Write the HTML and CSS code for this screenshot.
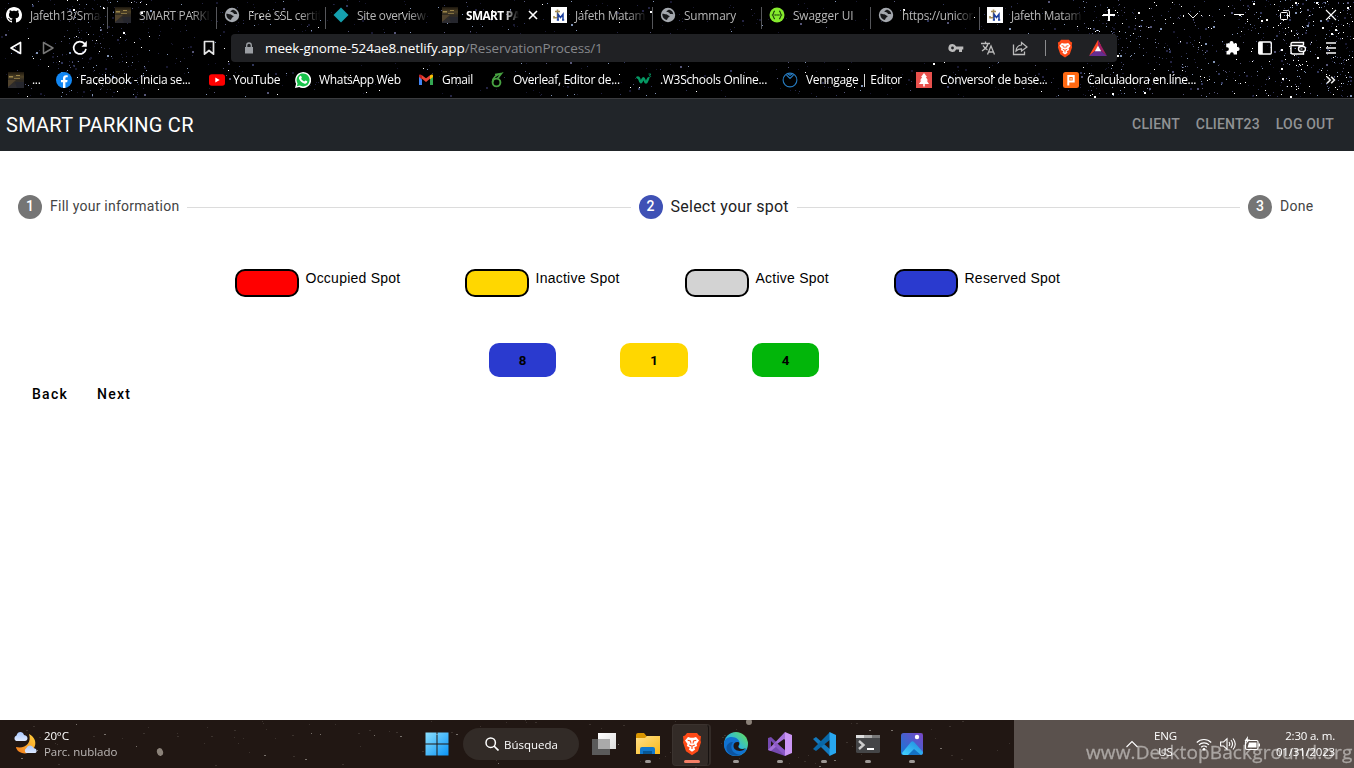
FILE: index.html
```html
<!DOCTYPE html>
<html lang="en">
<head>
<meta charset="utf-8">
<title>SMART PARKING CR</title>
<link rel="stylesheet" href="styles.css">
</head>
<body>
<svg class="defs" width="0" height="0">
  <defs>
    <linearGradient id="gFlag" x1="0" y1="0" x2="1" y2="1"><stop offset="0" stop-color="#8be0ff"/><stop offset="1" stop-color="#0a93f5"/></linearGradient>
    <linearGradient id="gFolder" x1="0" y1="0" x2="1" y2="1"><stop offset="0" stop-color="#ffe08a"/><stop offset="1" stop-color="#fbb917"/></linearGradient>
    <linearGradient id="gEdge" x1="0" y1="1" x2="1" y2="0"><stop offset="0" stop-color="#1380d8"/><stop offset=".5" stop-color="#2cb9db"/><stop offset="1" stop-color="#6be24c"/></linearGradient>
    <linearGradient id="gMoon" x1="0" y1="1" x2="1" y2="0"><stop offset="0" stop-color="#f47a1c"/><stop offset="1" stop-color="#ffd23c"/></linearGradient>
    <linearGradient id="gCloud" x1="0" y1="0" x2="0" y2="1"><stop offset="0" stop-color="#a9c8ff"/><stop offset="1" stop-color="#dfeaff"/></linearGradient>
    <linearGradient id="gPhoto" x1="0" y1="1" x2="1" y2="0"><stop offset="0" stop-color="#127bd6"/><stop offset="1" stop-color="#7a45c5"/></linearGradient>
    <linearGradient id="gHill" x1="0" y1="1" x2="1" y2="0"><stop offset="0" stop-color="#43d3ff"/><stop offset="1" stop-color="#1c86dc"/></linearGradient>
    <linearGradient id="gTask" x1="0" y1="0" x2="1" y2="1"><stop offset="0" stop-color="#fff"/><stop offset="1" stop-color="#dcdcdc"/></linearGradient>
    <linearGradient id="gRoad" x1="0" y1="0" x2="0" y2="1"><stop offset="0" stop-color="#1c160d"/><stop offset=".3" stop-color="#4d4127"/><stop offset=".5" stop-color="#2f2a22"/><stop offset="1" stop-color="#2d2d33"/></linearGradient>
  </defs>
  <symbol id="globe" viewBox="0 0 16 16"><circle cx="8" cy="8" r="7.200" fill="#a4a8ae"/><path d="M2.300 6.800c1.700 0 2.600.5 3.800.5 1.400 0 1.800 1.300 3 1.400.9.100.4 1.300-.4 1.500-1.300.3-.9 1.600-1.600 2.400-.6.700-1 .3-1.700 0-2-1-3.300-3.300-3.100-5.800zM8.500 2.800c-.4.900-1.900.6-2 1.800 0 1.100 1.500.5 2.400.9.900.4.700 1.600 1.900 1.600.9 0 1.700-.2 2.400.4.200-2.300-1.800-4.700-4.700-4.700z" fill="#17181a"/></symbol>
  <symbol id="photo" viewBox="0 0 16 16"><path d="M0 0h16v16H0z" fill="url(#gRoad)"/><path d="M1 4h4v1.500H1zM8 3h4v1H8zM6 6h6v.8H6z" fill="#9c854a"/><path d="M0 8l8 0-8 7z" fill="#51432d"/><path d="M7 10h9v6H9z" fill="#25262d"/></symbol>
  <symbol id="jm" viewBox="0 0 16 16"><path d="M0 0h16v16H0z" fill="#fff"/><path d="M6.500 2.500v8.300H3V9M4 4.500h5" fill="none" stroke="#a28b55" stroke-width="1.600"/><path d="M7 13V7.200l2.500 3.300L12 7.200V13M5.800 13h2.200M11 13h2.200" fill="none" stroke="#1b3f9e" stroke-width="1.500"/></symbol>
  <symbol id="brave" viewBox="0 0 20 24"><path d="M5 1h10l2 2.500 2 .8-.5 4 .5 2-3 9-6 4-6-4-3-9 .5-2-.5-4 2-.8z" fill="#ff4a17"/><path d="M6 5l2.500.7h3L14 5l3 3.500-2.500 3.500.7 2-3 1.600 1 1.800-3.200 2.300-3.200-2.300 1-1.800-3-1.600.7-2L3 8.500z" fill="#fff"/><path d="M5.700 8.300l2.800.7.500 2.500M14.300 8.300l-2.800.7-.5 2.500M7.200 13l2.800 1.200 2.800-1.200M10 14v3" fill="none" stroke="#ff4a17" stroke-width="1.100"/></symbol>
</svg>

<header class="browser">
  <canvas class="stars" id="sky" width="1354" height="98"></canvas>
  <div class="tabstrip">
    <div class="tab"><svg class="fav" viewBox="0 0 16 16"><path fill="#fff" d="M8 0C3.580 0 0 3.580 0 8c0 3.540 2.290 6.530 5.470 7.590.4.070.55-.17.55-.38 0-.19-.01-.82-.01-1.490-2.010.37-2.530-.49-2.690-.94-.09-.23-.48-.94-.82-1.130-.28-.15-.68-.52-.01-.53.63-.01 1.080.58 1.230.82.72 1.210 1.870.87 2.330.66.070-.52.28-.87.51-1.070-1.780-.2-3.640-.89-3.640-3.950 0-.87.31-1.590.82-2.150-.08-.2-.36-1.020.08-2.120 0 0 .67-.21 2.200.82.64-.18 1.320-.27 2-.27s1.360.09 2 .27c1.530-1.040 2.200-.82 2.200-.82.44 1.100.16 1.920.08 2.120.51.56.82 1.270.82 2.150 0 3.070-1.870 3.750-3.650 3.950.29.25.54.73.54 1.480 0 1.070-.01 1.930-.01 2.200 0 .21.15.46.55.38A8.010 8.010 0 0 0 16 8c0-4.420-3.580-8-8-8z"/></svg><span class="tab-name">Jafeth13/Sma</span></div>
    <div class="tab"><svg class="fav"><use href="#photo"/></svg><span class="tab-name">SMART PARKI</span></div>
    <div class="tab"><svg class="fav"><use href="#globe"/></svg><span class="tab-name">Free SSL certif</span></div>
    <div class="tab no-line"><svg class="fav" viewBox="0 0 16 16"><path d="M8 .5L15.500 8 8 15.500.5 8z" fill="#15a0ae"/></svg><span class="tab-name">Site overview</span></div>
    <div class="tab active no-line"><svg class="fav"><use href="#photo"/></svg><span class="tab-name">SMART PA</span><svg class="close" viewBox="0 0 10 10"><path d="M1 1l8 8M9 1L1 9" stroke="#fff" stroke-width="1.600"/></svg></div>
    <div class="tab"><svg class="fav"><use href="#jm"/></svg><span class="tab-name">Jafeth Matam</span></div>
    <div class="tab"><svg class="fav"><use href="#globe"/></svg><span class="tab-name short">Summary</span></div>
    <div class="tab"><svg class="fav" viewBox="0 0 16 16"><circle cx="8" cy="8" r="7.500" fill="#85ea2d"/><path d="M6 4.200c-2 0-1 2.800-2.500 3.800C5 9 4 11.800 6 11.800M10 4.200c2 0 1 2.800 2.500 3.800C11 9 12 11.800 10 11.800" fill="none" stroke="#21460d" stroke-width="1.200"/><path d="M5.500 8h5" stroke="#21460d" stroke-width="1.500" stroke-dasharray="1.300 .6"/></svg><span class="tab-name short">Swagger UI</span></div>
    <div class="tab"><svg class="fav"><use href="#globe"/></svg><span class="tab-name">https://unicor</span></div>
    <div class="tab no-line"><svg class="fav"><use href="#jm"/></svg><span class="tab-name">Jafeth Matam</span></div>
    <svg class="new-tab" viewBox="0 0 12 12"><path d="M6 0v12M0 6h12" stroke="#fff" stroke-width="2"/></svg>
    <div class="window-controls">
      <svg viewBox="0 0 12 12"><path d="M1 4l5 5 5-5" fill="none" stroke="#eee"/></svg>
      <svg viewBox="0 0 12 12"><path d="M1 5.500h10" stroke="#fff"/></svg>
      <svg viewBox="0 0 12 12"><rect x="1.500" y="3.500" width="7" height="7" rx="1" fill="none" stroke="#fff"/><path d="M4 1.500h5a1.500 1.500 0 0 1 1.500 1.500v5" fill="none" stroke="#ddd"/></svg>
      <svg viewBox="0 0 12 12"><path d="M1 1l10 10M11 1L1 11" stroke="#fff" stroke-width="1.100"/></svg>
    </div>
  </div>

  <div class="toolbar">
    <div class="nav-buttons">
      <svg viewBox="0 0 16 16"><path d="M12.500 2.500v11L3 8z" fill="none" stroke="#fff" stroke-width="1.700" stroke-linejoin="round"/></svg>
      <svg viewBox="0 0 16 16"><path d="M3.500 2.500v11L13 8z" fill="none" stroke="#777" stroke-width="1.500" stroke-linejoin="round"/></svg>
      <svg viewBox="0 0 16 16"><path d="M12.500 3.600A6.200 6.200 0 1 0 14 8.800" fill="none" stroke="#fff" stroke-width="1.700"/><path d="M14.800.8v6H9.500z" fill="#fff"/></svg>
    </div>
    <svg class="mark" viewBox="0 0 16 16"><path d="M3.500 1.500h9v12.700L8 10.500l-4.500 3.700z" fill="none" stroke="#e6e6e6" stroke-width="1.700" stroke-linejoin="round"/></svg>
    <div class="address">
      <svg class="lock" viewBox="0 0 10 12"><path d="M1 5h8v6.500H1z" fill="#9b9ea3"/><path d="M2.700 5V3.300a2.300 2.300 0 0 1 4.600 0V5" fill="none" stroke="#9b9ea3" stroke-width="1.300"/></svg>
      <span class="url">meek-gnome-524ae8.netlify.app<i>/ReservationProcess/1</i></span>
      <div class="address-icons">
        <svg viewBox="0 0 16 16"><path d="M4.500 4a4 4 0 1 0 3.600 5.500H11V12h3V9.500h1.300v-3H8.100A4 4 0 0 0 4.500 4zm0 2.600a1.400 1.400 0 1 1 0 2.800 1.400 1.400 0 0 1 0-2.800z" fill="#bbb"/></svg>
        <svg viewBox="0 0 16 16"><path d="M1 3.500h9M5.500 1.500v2M8 3.500C7.500 6 5 9 2 11M3 5.500c1 2 3 3.500 4.500 4.500M7.500 14.500l3.500-8.500 3.500 8.500M8.700 12h4.600" fill="none" stroke="#bbb" stroke-width="1.300"/></svg>
        <svg viewBox="0 0 16 16"><path d="M1.500 4.500v10h11v-3" fill="none" stroke="#bbb" stroke-width="1.300"/><path d="M9.500 2.500L15 7l-5.500 4V8.800c-2.500 0-4 .7-5.500 2.200.3-3.500 2-5.700 5.500-6z" fill="none" stroke="#bbb" stroke-width="1.200"/></svg>
      </div>
      <span class="rule"></span>
      <svg class="shield"><use href="#brave"/></svg>
      <svg class="bat" viewBox="0 0 18 16"><path d="M9 0l3 5.500L9 6 6 11l-6 5z" fill="#ff4724"/><path d="M9 0l9 16-6-5-3-5z" fill="#9e1f63"/><path d="M0 16l6-5h6l6 5z" fill="#662d91"/><path d="M9 5.500l3.200 5.700H5.800z" fill="#fff"/></svg>
    </div>
    <div class="extensions">
      <svg viewBox="0 0 16 16"><path d="M5.500 3a2 2 0 0 1 4 0v.5H13V7h.6a2 2 0 0 1 0 4H13v3.500H9.700V14a1.800 1.800 0 0 0-3.600 0v.5H2.500V11H3a1.900 1.900 0 0 0 0-3.800h-.8V3.500h3.300z" fill="#fff"/></svg>
      <svg viewBox="0 0 16 16"><rect x="1.700" y="2" width="12.600" height="12" rx="1" fill="none" stroke="#fff" stroke-width="1.300"/><path d="M2 2h3.800v12H2z" fill="#fff"/></svg>
      <svg viewBox="0 0 16 16"><path d="M13.500 5.500V2.500h-11A1.500 1.500 0 0 0 1 4v8a2 2 0 0 0 2 2h10.500v-3M1 4.300a1.500 1.500 0 0 0 1.500 1.200h11" fill="none" stroke="#fff" stroke-width="1.400"/><rect x="8.500" y="6.500" width="7" height="5" rx="2.400" fill="none" stroke="#fff" stroke-width="1.400"/><path d="M10.500 9h2" stroke="#fff"/></svg>
      <svg viewBox="0 0 16 16"><path d="M3 3h10M3 8h10M3 13h10" stroke="#bbb" stroke-width="1.800"/></svg>
    </div>
  </div>

  <div class="bookmarks">
    <div class="bm"><svg><use href="#photo"/></svg><span>...</span></div>
    <div class="bm"><svg viewBox="0 0 16 16"><circle cx="8" cy="8" r="8" fill="#1287f3"/><path d="M7 16v-5.700H5V8h2V6.300C7 4.200 8.200 3.200 10 3.200l1.700.1v2h-1c-1 0-1.300.5-1.300 1.200V8h2.200l-.4 2.300H9.400V16z" fill="#fff"/></svg><span>Facebook - Inicia se...</span></div>
    <div class="bm"><svg viewBox="0 0 16 16"><rect y="2.200" width="16" height="11.600" rx="2.800" fill="#f00"/><path d="M6.300 5.500v5L10.700 8z" fill="#fff"/></svg><span>YouTube</span></div>
    <div class="bm"><svg viewBox="0 0 16 16"><path d="M0 16l1.100-4.200A8 8 0 1 1 4.200 15z" fill="#fff"/><path d="M1.800 14.200l.8-2.700a6.500 6.500 0 1 1 2.200 2.100z" fill="#19c34b"/><path d="M5.200 3.900c.7-.4 1.100.1 1.600 1.600.1.600-.7.900-.6 1.300.6 1.300 1.700 2.100 3 2.700.6-.2.800-1 1.200-1 .9.300 1.900.8 1.900 1.100 0 1.800-1.800 2.400-3.200 1.800-2.200-.7-4-2.300-5-4.500-.5-1.200.1-2.500 1.100-3z" fill="#fff"/></svg><span>WhatsApp Web</span></div>
    <div class="bm"><svg viewBox="0 0 16 16"><path d="M1 3.500v9.500h3V7.500z" fill="#4285f4"/><path d="M15 3.500v9.500h-3V7.500z" fill="#34a853"/><path d="M2.800 4L8 8.200 13.200 4" fill="none" stroke="#ea4335" stroke-width="2.800"/><path d="M1 4c0-1.800 1.500-1.900 3-.5v4L1 5z" fill="#c5221f"/><path d="M15 4c0-1.800-1.500-1.900-3-.5v4L15 5z" fill="#fbbc04"/></svg><span>Gmail</span></div>
    <div class="bm"><svg viewBox="0 0 16 16"><circle cx="7.500" cy="10.500" r="3.900" fill="none" stroke="#47a141" stroke-width="1.900"/><path d="M3.600 10C3.500 6 6.500 3 12.500 1.500L9 6M6 2.500l6-1" fill="none" stroke="#47a141" stroke-width="1.700"/></svg><span>Overleaf, Editor de...</span></div>
    <div class="bm"><svg viewBox="0 0 16 16"><path d="M.5 6c2-1.500 2.500 0 3 1.500.8 3 1.500 4 2.700.5.800-2.500 1.600-2.500 2.300 0 .9 3.500 2 3 3 0 .5-1.500 1-2 1.800-2" fill="none" stroke="#059862" stroke-width="2.400"/><path d="M12.500 2h2.300L13.500 3.500c1.600 0 1.500 2-.7 1.800" fill="none" stroke="#059862" stroke-width=".9"/></svg><span>.W3Schools Online...</span></div>
    <div class="bm"><svg viewBox="0 0 16 16"><circle cx="8" cy="8" r="6.900" fill="none" stroke="#267bc0" stroke-width="1.100"/><path d="M4.500 3l3.500 3.500L11.500 3M6 2l2 1.300L10 2" fill="none" stroke="#267bc0" stroke-width="1.100"/></svg><span>Venngage | Editor</span></div>
    <div class="bm"><svg viewBox="0 0 16 16"><path d="M0 0h16v16H0z" fill="#e8514d"/><path d="M8 1l3 4H9.800L12 8.500h-1.300L13 12H8.800v2.500H7.200V12H3l2.300-3.500H4L6.200 5H5z" fill="#fff"/></svg><span>Conversor de base...</span></div>
    <div class="bm"><svg viewBox="0 0 16 16"><rect width="16" height="16" rx="2.500" fill="#ff6a13"/><path d="M5.300 13.500V4h5.400v5.500H5.300" fill="none" stroke="#fff" stroke-width="2"/><path d="M7.300 6h1.500v1.700H7.300z" fill="#fff" opacity=".7"/></svg><span>Calculadora en líne...</span></div>
    <svg class="more" viewBox="0 0 10 8"><path d="M1 .8L4.200 4 1 7.200M5.200.8L8.400 4 5.200 7.200" fill="none" stroke="#eee" stroke-width="1.600"/></svg>
  </div>
</header>

<nav class="site-nav">
  <span class="brand">SMART PARKING CR</span>
  <div class="site-links"><span>CLIENT</span><span>CLIENT23</span><span>LOG OUT</span></div>
</nav>

<main class="page">
  <div class="stepper">
    <div class="step"><b>1</b><span class="label l1">Fill your information</span></div>
    <hr>
    <div class="step current"><b>2</b><span class="label l2">Select your spot</span></div>
    <hr>
    <div class="step"><b>3</b><span class="label l3">Done</span></div>
  </div>
  <div class="legend">
    <div class="key"><i class="swatch red"></i><span>Occupied Spot</span></div>
    <div class="key"><i class="swatch gold"></i><span>Inactive Spot</span></div>
    <div class="key"><i class="swatch gray"></i><span>Active Spot</span></div>
    <div class="key"><i class="swatch blue"></i><span>Reserved Spot</span></div>
  </div>
  <div class="spots">
    <button class="spot blue">8</button>
    <button class="spot gold">1</button>
    <button class="spot green">4</button>
  </div>
  <div class="actions"><span>Back</span><span>Next</span></div>
</main>

<footer class="taskbar">
  <canvas class="stars" id="dust" width="1354" height="48"></canvas>
  <div class="weather">
    <svg viewBox="0 0 24 24"><path d="M16 3c6 3 8 9 5 14-3 6-11 7-16 3-1-1-2-3-2-4 9 2 16-4 13-13z" fill="url(#gMoon)"/><path d="M3 10a3 3 0 0 1 .5-5.500C4.500 0 10 0 11 4c5 1 4 6 1 6z" fill="url(#gCloud)"/><path d="M13 22a3 3 0 0 1 .5-5c1-3.500 6-3.500 7 0 4 .5 4 5 1 5z" fill="url(#gCloud)"/></svg>
    <div class="weather-text"><span>20°C</span><span>Parc. nublado</span></div>
  </div>
  <div class="apps">
    <svg class="start" viewBox="0 0 24 24"><path d="M.5.500h11v11H.5zM12.500.500h11v11h-11zM.5 12.500h11v11H.5zM12.500 12.500h11v11h-11z" fill="url(#gFlag)"/></svg>
    <div class="search"><svg viewBox="0 0 14 14"><circle cx="5.700" cy="5.700" r="4.700" fill="none" stroke="#fff" stroke-width="1.500"/><path d="M9 9l4.500 4.500" stroke="#fff" stroke-width="1.700"/></svg><span>Búsqueda</span></div>
    <div class="app"><svg viewBox="0 0 24 24"><rect x="6" y="1" width="18" height="16" fill="url(#gTask)"/><rect y="7" width="18" height="16" fill="#5a5a5a"/><path d="M6 7h12v10H6z" fill="#aaa"/></svg></div>
    <div class="app open"><svg viewBox="0 0 24 24"><path d="M0 3q0-2 2-2h6l2.500 3H24v5H0z" fill="#d99500"/><path d="M0 6h9l2-2h13v18H0z" fill="url(#gFolder)"/><path d="M4 22v-5q0-2 2-2h11q2 0 2 2v5z" fill="#1178cc"/><path d="M7 19h9v3H7z" fill="#075795"/></svg></div>
    <div class="app open focus"><svg><use href="#brave"/></svg></div>
    <div class="app open"><svg viewBox="0 0 24 24"><circle cx="12" cy="12" r="12" fill="url(#gEdge)"/><path d="M0 12C0 5 9 3 14 7.500c2 2 2 4 1 6-1.500 4 5 5 8 3-3 8-14 9-19 5-3-2-4-6-4-9.500z" fill="#1172d0"/><path d="M9 10c-5 7 2 14 9 12.500-8 3.500-16-1-15.500-7C2.700 12 6 10 9 10z" fill="#0c55a2"/><path d="M9.500 14c0-3 2-4.500 5-4 1.500 1.500.5 3-.3 4.200-.4 2.300 3.800 3.800 7.800 1.900-4.500 5-12.500 2.900-12.500-2.100z" fill="#211713"/></svg></div>
    <div class="app open"><svg viewBox="0 0 24 24"><path d="M0 6l3-1 15 14-1 5L0 18z" fill="#764ab0"/><path d="M3 9v6l3-3z" fill="#211713"/><path d="M17 0v7L3 19l-3-1z" fill="#a370d8"/><path d="M9 12l7-5v10z" fill="#211713"/><path d="M8 10l9 9v5L6 13z" fill="#8a58c6"/><path d="M17 0l7 3v18l-7 3z" fill="#cb96f4"/></svg></div>
    <div class="app open"><svg viewBox="0 0 24 24"><path d="M1 7l3-2 15 13-1 6z" fill="#1379bd"/><path d="M1 17l3 2L19 7l-1-7z" fill="#0968a8"/><path d="M17.500 0L24 3v18l-6.500 3z" fill="#28a7ef"/></svg></div>
    <div class="app open"><svg viewBox="0 0 24 24"><rect y="3" width="24" height="18" rx="1.500" fill="#444547"/><path d="M0 3h8v3H0z" fill="#ddd"/><path d="M8 3h8v3H8z" fill="#aaa"/><path d="M16 3h8v3h-8z" fill="#777"/><path d="M3 9l4.500 4L3 17" fill="none" stroke="#ccc" stroke-width="2.400"/><path d="M11 17h7" stroke="#fff" stroke-width="2"/></svg></div>
    <div class="app open"><svg viewBox="0 0 24 24"><rect x="1" y="1" width="22" height="22" rx="2.500" fill="url(#gPhoto)"/><path d="M2 21L11 10q1.500-1.500 3 0l9 10q0 3-3 3H4q-2 0-2-2z" fill="url(#gHill)"/><path d="M8 23l6-6 7 6z" fill="#1471c4"/><circle cx="17" cy="5" r="2.200" fill="#fff"/></svg></div>
  </div>
  <div class="tray">
    <span class="watermark">www.DesktopBackground.org</span>
    <svg class="caret" viewBox="0 0 12 8"><path d="M.5 7L6 1.500 11.500 7" fill="none" stroke="#fff" stroke-width="1.100"/></svg>
    <div class="lang"><span>ENG</span><span>US</span></div>
    <div class="status">
      <svg viewBox="0 0 16 16"><path d="M.8 6.500a10.200 10.200 0 0 1 14.400 0M3 8.900a7 7 0 0 1 10 0M5.200 11.300a4 4 0 0 1 5.600 0" fill="none" stroke="#fff" stroke-width="1.200"/><circle cx="8" cy="13.200" r="1.300" fill="#fff"/></svg>
      <svg viewBox="0 0 16 16"><path d="M.6 6h3L7 2.700v10.600L3.600 10h-3zM9 6q1.500 2 0 4M11 4q3 4 0 8M13 2.500q4.500 5.500 0 11" fill="none" stroke="#fff" stroke-width="1.100"/></svg>
      <svg viewBox="0 0 16 16"><rect x="1.500" y="4.500" width="12.500" height="9" rx="1.500" fill="none" stroke="#fff" stroke-width="1.200"/><path d="M5 6.500h7.500v5H3.500zM14.500 7.500H16v3h-1.500z" fill="#fff"/><path d="M4 0L.5 5H3L1.500 8.500 6 3.500H3.700z" fill="#fff"/></svg>
    </div>
    <div class="clock"><span>2:30 a. m.</span><span>01/31/2023</span></div>
  </div>
</footer>
<script src="stars.js"></script>
</body>
</html>
```

FILE: styles.css
```css
* { box-sizing: border-box; }
body { margin: 0; width: 1354px; height: 768px; overflow: hidden; display: flex; flex-direction: column; background: #fff; font-family: "Open Sans", "Noto Sans", sans-serif; }
svg { display: block; flex: none; }
.defs { position: absolute; }
.stars { position: absolute; left: 0; top: 0; z-index: -1; }

.browser { position: relative; z-index: 0; height: 98px; background: #000; color: #fff; font-size: 12px; }
.tabstrip { display: flex; align-items: center; height: 30px; }
.tab { display: flex; align-items: center; flex: none; width: 109px; height: 30px; padding-left: 6px; gap: 4px; position: relative; }
.tab:not(.no-line)::after { content: ""; position: absolute; right: 1px; top: 7px; height: 22px; width: 1px; background: #55565a; }
.fav { width: 16px; height: 16px; }
.tab-name { width: 78px; padding-left: 4px; line-height: 20px; white-space: nowrap; color: #b6b6b6; font-size: 11.800px; letter-spacing: -.3px; -webkit-mask-image: linear-gradient(90deg, #000 72%, transparent 98%); mask-image: linear-gradient(90deg, #000 72%, transparent 98%); }
.tab-name.short { -webkit-mask-image: none; mask-image: none; letter-spacing: -.1px; }
.active .tab-name { width: 58px; color: #fff; font-weight: 700; letter-spacing: -.6px; }
.close { width: 10px; height: 10px; margin-left: 4px; }
.new-tab { width: 12px; height: 12px; margin-left: 13px; }
.window-controls { display: flex; margin-left: auto; padding-right: 17px; gap: 34px; }
.window-controls svg { width: 12px; height: 12px; }

.toolbar { display: flex; align-items: center; height: 36px; padding-left: 8px; }
.nav-buttons { display: flex; gap: 16px; }
.nav-buttons svg, .mark { width: 16px; height: 16px; }
.mark { margin-left: 113px; }
.address { display: flex; align-items: center; width: 886px; height: 28px; margin-left: 14px; padding-left: 13px; border-radius: 4px; background: #202124; }
.lock { width: 10px; height: 12px; }
.url { margin-left: 11px; width: 674px; font-size: 13.500px; letter-spacing: -.12px; white-space: nowrap; }
.url i { font-style: normal; color: #85878b; }
.address-icons { display: flex; gap: 16px; margin-left: 9px; }
.address-icons svg { width: 16px; height: 16px; }
.rule { width: 1px; height: 16px; margin: 0 11px 0 17px; background: #8b8c8e; }
.shield { width: 16px; height: 19px; }
.bat { width: 18px; height: 16px; margin-left: 16px; }
.extensions { display: flex; gap: 17px; margin-left: 107px; }
.extensions svg { width: 16px; height: 16px; }

.bookmarks { display: grid; grid-template-columns: 48px 153px 86px 123px 71px 147px 146px 134px 147px 256px 16px; align-items: center; height: 28px; padding-left: 8px; }
.bm { display: flex; align-items: center; gap: 8px; white-space: nowrap; letter-spacing: -.32px; }
.bm span { margin-top: -1px; }
.bm svg { width: 16px; height: 16px; }
.more { width: 10px; height: 8px; margin-left: 7px; }

.site-nav { display: flex; align-items: center; justify-content: space-between; height: 53px; padding: 0 20px 0 6px; border-top: 1px solid #3b3c3f; background: #212529; font-family: Roboto, sans-serif; }
.brand { color: #fff; font-size: 20px; letter-spacing: .27px; }
.site-links { display: flex; gap: 16px; margin-top: -2px; color: #909294; font-size: 14px; font-weight: 500; letter-spacing: .15px; }

.page { flex: 1; font-family: Roboto, sans-serif; }
.stepper { display: flex; align-items: center; gap: 8px; height: 24px; margin: 44px 40px 0 18px; color: #444; }
.stepper hr { flex: 1; height: 1px; margin: 0; border: 0; background: #dcdcdc; }
.step { display: flex; align-items: center; gap: 8px; white-space: nowrap; }
.step b { width: 24px; height: 24px; line-height: 23px; border-radius: 50%; background: #757575; color: #fff; font-size: 14px; font-weight: 500; text-align: center; }
.current b { background: #3f51b5; }
.label { margin-top: -2px; font-size: 14px; letter-spacing: .25px; }
.l1 { width: 129px; }
.l2 { width: 118px; font-size: 16px; letter-spacing: .25px; color: #222; }
.l3 { width: 34px; }

.legend { display: grid; grid-template-columns: 230px 220px 209px 200px; margin: 50px 0 0 235px; font: 14px/19px "Liberation Sans", Arial, sans-serif; letter-spacing: .24px; color: #000; }
.key { display: flex; gap: 6.500px; white-space: nowrap; }
.swatch { width: 64px; height: 28px; border: 2px solid #000; border-radius: 10px; }
.red { background: #f00; }
.gold { background: gold; }
.gray { background: #d3d3d3; }
.blue { background: #2a3acf; }
.green { background: #02b60a; }

.spots { display: flex; gap: 64.300px; margin: 46px 0 0 489px; }
.spot { width: 67.200px; height: 34px; padding: 0; border: 0; border-radius: 10px; color: #000; font: 700 13.330px Roboto, sans-serif; }
.actions { display: flex; gap: 29px; margin: 9px 0 0 32px; font-size: 14px; line-height: 17px; font-weight: 500; letter-spacing: 1.250px; color: #000; }

.taskbar { position: relative; z-index: 0; display: flex; height: 48px; background: #211713; color: #fff; font-size: 11.500px; }
.weather { display: flex; align-items: center; width: 415px; padding-left: 13px; gap: 7px; }
.weather svg { width: 24px; height: 24px; margin-top: -3px; }
.weather-text { display: flex; flex-direction: column; line-height: 16px; letter-spacing: -.15px; }
.weather-text span + span { color: #bdb9b7; letter-spacing: -.05px; }
.apps { display: flex; align-items: center; width: 599px; padding-left: 10px; }
.start { width: 24px; height: 24px; }
.search { display: flex; align-items: center; gap: 5px; width: 116px; height: 32px; margin: 0 3px 0 14px; padding-left: 22px; border-radius: 16px; background: #322b27; }
.search svg { width: 14px; height: 14px; }
.app { display: flex; align-items: center; justify-content: center; position: relative; width: 44px; height: 48px; }
.app svg { width: 24px; height: 24px; }
.app.open::after { content: ""; position: absolute; left: 19px; bottom: 5px; width: 6px; height: 3px; border-radius: 2px; background: #9d9895; }
.focus { z-index: 0; }
.focus::before { content: ""; position: absolute; z-index: -1; left: 2px; top: 4px; width: 35px; height: 40px; border-radius: 4px; background: #332b27; border: 1px solid #3b332f; border-right: 1px solid #171210; box-shadow: 2px 0 #332b27; }
.app.focus::after { left: 14px; width: 16px; background: #f57f67; }
.tray { position: relative; display: flex; align-items: center; width: 340px; background: #5a514d; }
.watermark { position: absolute; left: 72px; top: 20px; color: #aaa5a2; font-size: 19px; line-height: 24px; letter-spacing: .12px; white-space: nowrap; -webkit-text-stroke: .3px #aaa5a2; }
.tray > :not(.watermark) { position: relative; }
.caret { width: 12px; height: 8px; margin-left: 112px; }
.lang { display: flex; flex-direction: column; align-items: center; width: 25px; margin-left: 15px; line-height: 16px; letter-spacing: -.1px; }
.status { display: flex; gap: 8px; margin-left: 18px; }
.status svg { width: 16px; height: 16px; }
.clock { display: flex; flex-direction: column; align-items: flex-end; width: 65px; margin-left: 10px; line-height: 16px; letter-spacing: -.2px; white-space: nowrap; }
```

FILE: stars.js
```js
// Seeded generator keeps the star field identical on every load.
let seed = 7919;
function rnd() {
  seed = (seed * 1103515245 + 12345) % 2147483648;
  return seed / 2147483648;
}

const sky = document.getElementById('sky').getContext('2d');
const tints = ['#181830', '#242443', '#30365a', '#555577', '#8193b5', '#ffffff'];
function scatter(count, x0, x1, bright) {
  for (let i = 0; i < count; i++) {
    const size = rnd() < 0.12 ? 2 : 1;
    sky.fillStyle = tints[Math.floor(Math.pow(rnd(), bright) * tints.length)];
    sky.fillRect(Math.floor(x0 + rnd() * (x1 - x0)), Math.floor(rnd() * 97), size, size);
  }
}
scatter(850, 0, 1130, 1.8);
scatter(170, 60, 150, 1.2);
scatter(620, 1080, 1354, 0.8);
scatter(170, 1280, 1354, 0.5);

const dust = document.getElementById('dust').getContext('2d');
for (let i = 0; i < 130; i++) {
  dust.fillStyle = rnd() < 0.15 ? '#77706a' : '#3b322d';
  dust.fillRect(Math.floor(rnd() * 1014), Math.floor(rnd() * 48), 1 + Math.round(rnd()), 1);
}
dust.fillStyle = '#8b8279';
dust.beginPath();
dust.ellipse(160, 32, 3, 4, -0.3, 0, 7);
dust.ellipse(749, 2, 3, 3, 0, 0, 7);
dust.fill();
```
